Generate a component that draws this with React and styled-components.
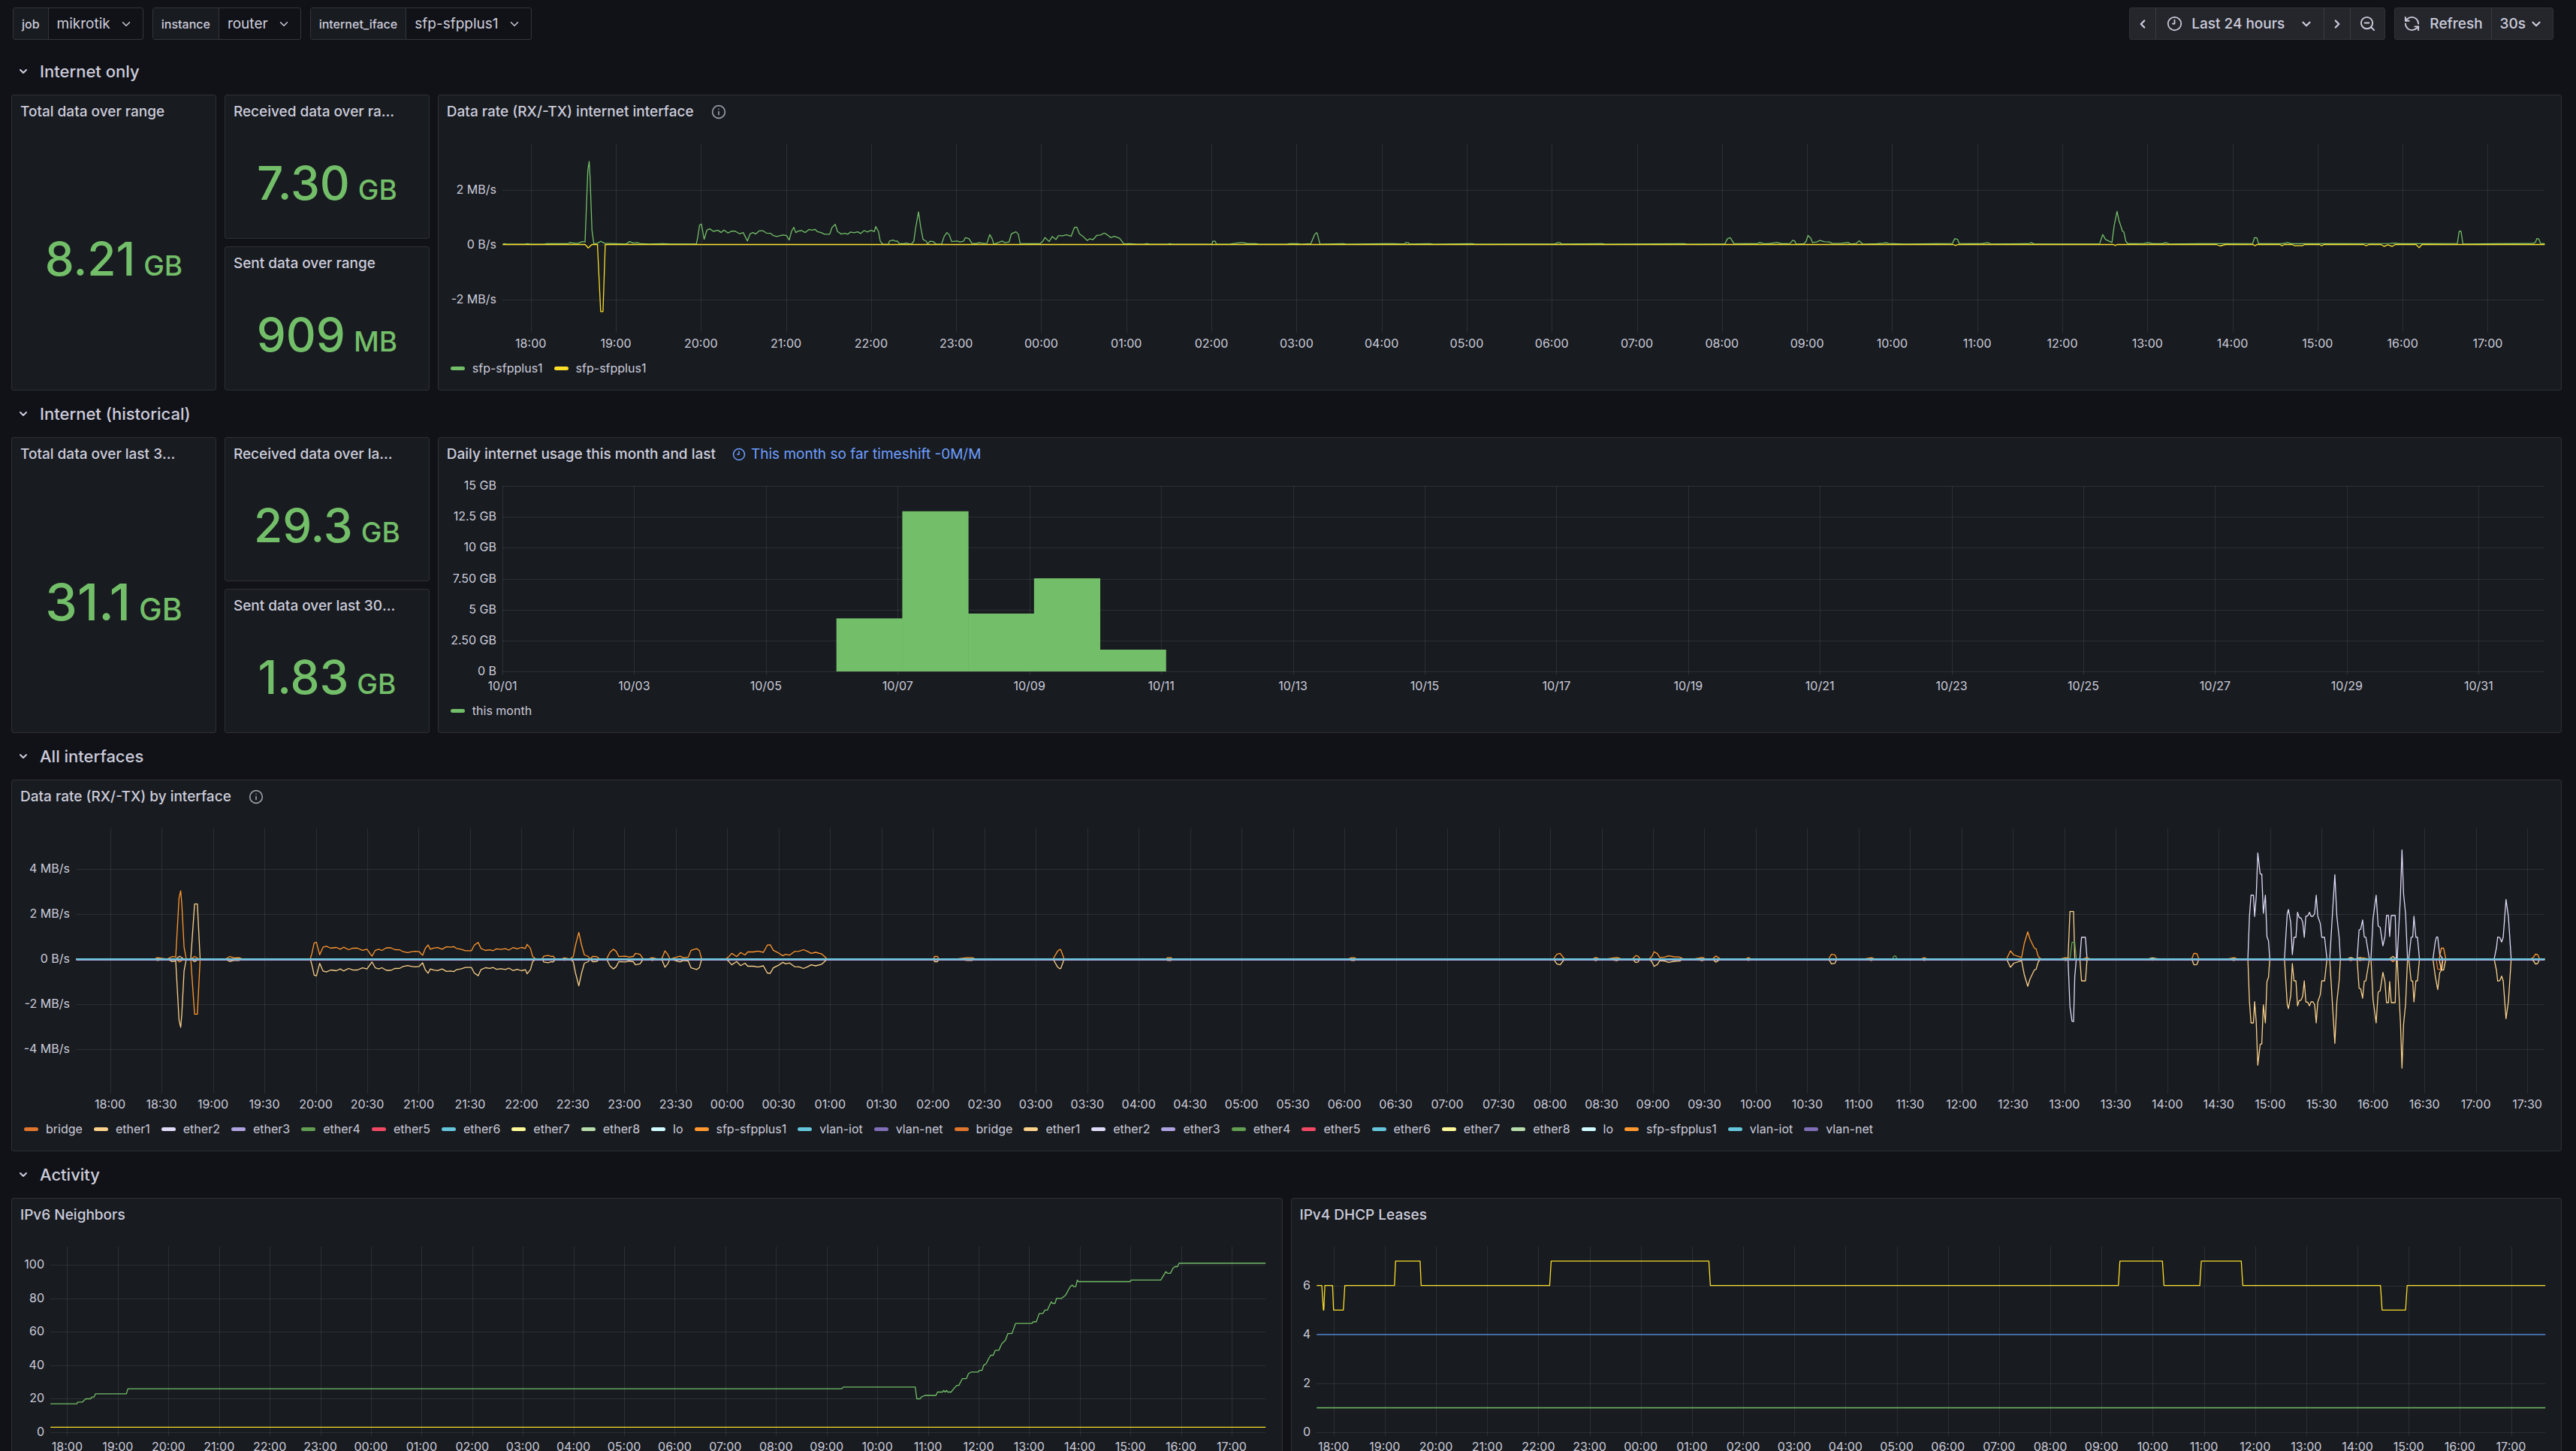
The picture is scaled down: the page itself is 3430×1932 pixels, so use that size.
import React, { useLayoutEffect, useRef, useState } from "react";
import styled, { createGlobalStyle } from "styled-components";
import {
  ChevronDown,
  ChevronLeft,
  ChevronRight,
  RefreshCcw,
  ZoomOut
} from "lucide-react";

const GREEN = "#73bf69";
const YELLOW = "#fade2a";
const BLUE = "#5794f2";

const IFACE_COLORS = {
  bridge: "#e0752d",
  ether1: "#fbd18b",
  ether2: "#dedaf7",
  ether3: "#aea2e0",
  ether4: "#629e51",
  ether5: "#f24865",
  ether6: "#65c5db",
  ether7: "#fff899",
  ether8: "#b7dbab",
  lo: "#cffaff",
  "sfp-sfpplus1": "#ff9830",
  "vlan-iot": "#65c5db",
  "vlan-net": "#806eb7"
};

// Times are hours from midnight of the first day, values are MB/s.
const unpack = (pairs, { tick, hour, perHour, perUnit }) =>
  pairs.map(([t, level]) => [hour + (t - tick) / perHour, level / perUnit]);

const negate = points => points.map(([t, v]) => [t, -v]);

// idle chatter is not worth drawing next to the busy interfaces
const quiet = points => points.map(([t, v]) => [t, Math.abs(v) < 0.05 ? 0 : v]);

const WAN = { tick: 223, hour: 18, perHour: 185, perUnit: 110 };
const LAN = { tick: 24, hour: 36, perHour: 259, perUnit: 90 };

const wanRx = unpack(
  [
    [162, 1], [166, 3], [170, 1], [210, 1], [216, 3], [222, 1], [253, 1], [256, 3],
    [302, 3], [308, 7], [325, 4], [335, 12], [341, 10], [347, 298], [350, 333], [352, 268],
    [356, 58], [360, 4], [368, 5], [375, 13], [383, 5], [430, 2], [438, 12], [446, 6],
    [455, 7], [462, 3], [480, 2], [510, 3], [530, 2], [583, 2], [586, 28], [590, 78],
    [594, 82], [600, 21], [606, 58], [612, 63], [620, 53], [630, 57], [637, 48], [643, 58],
    [652, 46], [660, 54], [668, 53], [677, 43], [685, 48], [694, 14], [700, 43], [706, 48],
    [712, 42], [720, 55], [728, 55], [735, 46], [744, 45], [750, 36], [758, 32], [766, 36],
    [772, 38], [779, 36], [785, 18], [790, 53], [795, 69], [799, 48], [805, 54], [812, 56],
    [820, 48], [828, 60], [836, 58], [841, 61], [846, 52], [854, 48], [862, 41], [873, 41],
    [878, 68], [885, 81], [890, 52], [898, 42], [906, 45], [912, 41], [918, 50], [926, 47],
    [934, 51], [940, 44], [948, 56], [955, 50], [963, 57], [970, 52], [973, 72], [979, 52],
    [983, 13], [989, 0], [1000, 0], [1003, 14], [1011, 18], [1016, 13], [1020, 14], [1024, 4],
    [1034, 3], [1040, 6], [1050, 1], [1056, 13], [1060, 68], [1066, 131], [1071, 68], [1076, 20],
    [1083, 13], [1086, 2], [1091, 13], [1098, 12], [1104, 2], [1116, 1], [1122, 33], [1128, 48],
    [1133, 38], [1138, 12], [1150, 14], [1156, 10], [1164, 13], [1168, 28], [1176, 23], [1182, 5],
    [1190, 3], [1198, 7], [1208, 4], [1215, 5], [1221, 40], [1226, 23], [1230, 1], [1240, 8],
    [1248, 14], [1254, 7], [1263, 10], [1268, 43], [1278, 51], [1283, 41], [1287, 4], [1330, 3],
    [1336, 12], [1341, 28], [1350, 12], [1357, 32], [1365, 20], [1370, 35], [1380, 35], [1388, 39],
    [1398, 33], [1405, 68], [1410, 70], [1416, 43], [1424, 32], [1433, 16], [1438, 23], [1445, 19],
    [1454, 37], [1462, 38], [1470, 46], [1477, 38], [1484, 28], [1492, 33], [1503, 25], [1513, 2],
    [1524, 3], [1540, 1], [1556, 1], [1562, 3], [1570, 1], [1608, 1], [1612, 3], [1618, 1],
    [1704, 1], [1706, 13], [1711, 13], [1714, 1], [1744, 2], [1765, 7], [1773, 7], [1781, 3],
    [1800, 3], [1806, 1], [1868, 1], [1872, 3], [1890, 3], [1898, 1], [1919, 3], [1927, 38],
    [1931, 47], [1933, 45], [1939, 1], [1990, 3], [1996, 1], [2080, 3], [2100, 3], [2122, 2],
    [2125, 7], [2131, 7], [2134, 2], [2178, 3], [2186, 1], [2270, 3], [2276, 1], [2449, 2],
    [2456, 7], [2461, 7], [2465, 2], [2552, 3], [2560, 1], [2730, 3], [2738, 1], [2819, 2],
    [2825, 23], [2831, 28], [2839, 4], [2889, 3], [2895, 8], [2903, 4], [2914, 3], [2933, 8],
    [2943, 3], [2961, 4], [2967, 17], [2971, 14], [2975, 1], [2991, 3], [2996, 13], [3000, 36],
    [3006, 26], [3010, 8], [3019, 10], [3026, 16], [3036, 11], [3046, 10], [3053, 4], [3071, 4],
    [3087, 8], [3093, 2], [3105, 4], [3111, 15], [3120, 1], [3150, 3], [3163, 5], [3170, 7],
    [3175, 4], [3210, 2], [3314, 4], [3319, 23], [3325, 21], [3329, 4], [3377, 3], [3391, 7],
    [3398, 2], [3479, 3], [3486, 7], [3492, 2], [3560, 2], [3634, 2], [3641, 40], [3647, 20],
    [3661, 8], [3666, 78], [3672, 133], [3676, 98], [3684, 53], [3687, 50], [3691, 13], [3696, 3],
    [3730, 4], [3740, 7], [3750, 3], [3770, 3], [3778, 7], [3786, 2], [3850, 3], [3967, 4],
    [3971, 28], [3976, 27], [3980, 3], [4031, 3], [4043, 7], [4051, 3], [4266, 4], [4275, 6],
    [4286, 3], [4412, 4], [4416, 53], [4420, 53], [4424, 2], [4500, 3], [4577, 4], [4582, 10],
    [4585, 24], [4589, 22], [4593, 4], [4602, 3]
  ],
  WAN
);

const wanTx = unpack(
  [
    [162, 0], [341, 0], [348, -14], [356, 0], [368, 0], [375, -269], [380, -269], [385, 0],
    [3316, 0], [3321, -4], [3326, 0], [3664, 0], [3668, -4], [3672, 0], [3888, 0], [3896, -6],
    [3908, 0], [3968, 0], [3972, -5], [3976, 0], [4025, 0], [4031, -5], [4036, 0], [4053, 0],
    [4058, -5], [4075, -5], [4080, 0], [4112, 0], [4117, -5], [4122, 0], [4208, 0], [4214, -5],
    [4220, 0], [4246, 0], [4253, -8], [4261, -1], [4270, -8], [4277, 0], [4322, 0], [4329, -13],
    [4335, 0], [4602, 0]
  ],
  WAN
);

const lanBursts = [
  [322, 0], [326, 87], [336, 87], [340, 0],
  [745, 0], [749, 170], [753, 255], [759, 255], [762, 170], [766, 250], [770, 424], [776, 340],
  [780, 339], [784, 183], [789, 255], [793, 90], [797, 72], [800, 0],
  [837, 0], [844, 180], [847, 198], [853, 145], [857, 18], [861, 87], [866, 87], [870, 187],
  [874, 167], [879, 163], [883, 148], [887, 87], [891, 171], [896, 173], [900, 187], [904, 171],
  [909, 171], [913, 182], [917, 255], [921, 171], [927, 143], [931, 87], [938, 87], [944, 0],
  [951, 0], [959, 210], [964, 337], [969, 170], [975, 85], [978, 0],
  [1020, 0], [1025, 117], [1029, 119], [1034, 156], [1038, 88], [1042, 87], [1051, 0],
  [1055, 0], [1060, 160], [1068, 255], [1073, 132], [1078, 127], [1085, 53], [1090, 90],
  [1094, 174], [1099, 174], [1102, 90], [1106, 174], [1116, 174], [1119, 0],
  [1121, 0], [1129, 250], [1133, 436], [1137, 260], [1142, 180], [1147, 0],
  [1150, 0], [1156, 87], [1160, 88], [1163, 171], [1168, 87], [1172, 87], [1177, 0]
];

const lateBurst = [
  [1365, 0], [1371, 45], [1374, 88], [1379, 86], [1384, 68], [1388, 88], [1395, 238],
  [1401, 170], [1408, 0]
];

const ether2Rx = unpack(
  [...lanBursts, [1211, 0], [1217, 70], [1220, 88], [1223, 88], [1228, 18], [1236, 0], ...lateBurst],
  LAN
);
const ether1Tx = negate(
  unpack(
    [...lanBursts, [1211, 0], [1217, 70], [1223, 122], [1228, 55], [1233, 42], [1236, 0], ...lateBurst],
    LAN
  )
);
const ether1Rx = unpack([[292, 0], [297, 190], [306, 190], [309, 0]], LAN);
const ether2Tx = unpack(
  [[292, 0], [297, -190], [302, -248], [306, -250], [309, -70], [313, 0]],
  LAN
);
const ether4Rx = unpack(
  [[-150, 0], [-146, 12], [-142, 12], [-138, 0], [297, 0], [302, 67], [309, 67], [313, 0]],
  LAN
);
const bridgeTx = unpack(
  [[1020, 0], [1024, -5], [1030, 0], [1219, 0], [1223, -40], [1230, -42], [1236, 0]],
  LAN
);

const neighbors = [
  [17.67, 17], [18.19, 17], [18.21, 18], [18.3, 18], [18.33, 19], [18.37, 20], [18.46, 20],
  [18.49, 21], [18.53, 21], [18.56, 23], [19.17, 23], [19.2, 26], [33.3, 26], [33.33, 27],
  [34.75, 27], [34.78, 20], [34.85, 20], [34.87, 21], [34.94, 22], [35.16, 22], [35.19, 24],
  [35.29, 24], [35.31, 25], [35.34, 24], [35.37, 25], [35.39, 24], [35.46, 24], [35.51, 26],
  [35.57, 28], [35.61, 28], [35.68, 32], [35.76, 32], [35.8, 35], [35.86, 36], [35.99, 36],
  [36.02, 37], [36.07, 37], [36.1, 40], [36.15, 41], [36.2, 44], [36.24, 46], [36.29, 46],
  [36.33, 49], [36.4, 49], [36.46, 53], [36.53, 55], [36.58, 59], [36.66, 59], [36.73, 65],
  [37.05, 65], [37.08, 66], [37.14, 66], [37.2, 71], [37.27, 71], [37.31, 73], [37.36, 73],
  [37.42, 77], [37.44, 78], [37.46, 77], [37.51, 77], [37.54, 80], [37.64, 80], [37.72, 82],
  [37.81, 87], [37.85, 88], [37.88, 87], [37.92, 87], [37.95, 91], [37.97, 90], [38.99, 90],
  [39.02, 91], [39.6, 91], [39.66, 94], [39.7, 96], [39.73, 95], [39.79, 95], [39.84, 98],
  [39.88, 99], [39.93, 99], [39.96, 101], [41.67, 101]
];

const leases = [
  [17.67, 6], [17.77, 6], [17.8, 5], [17.81, 5], [17.83, 6], [17.98, 6], [18, 5], [18.19, 5],
  [18.22, 6], [19.19, 6], [19.21, 7], [19.69, 7], [19.71, 6], [22.22, 6], [22.25, 7],
  [25.33, 7], [25.36, 6], [33.33, 6], [33.36, 7], [34.19, 7], [34.22, 6], [34.92, 6],
  [34.95, 7], [35.73, 7], [35.76, 6], [38.45, 6], [38.48, 5], [38.94, 5], [38.97, 6],
  [41.67, 6]
];

const flat = value => [[17.67, value], [41.67, value]];

const dailyUsage = [4.29, 12.95, 4.68, 7.53, 1.76];

const clock = t => {
  const h = String(Math.floor(t) % 24).padStart(2, "0");
  return `${h}:${t % 1 ? "30" : "00"}`;
};

const timeTicks = (count, step) =>
  Array.from({ length: count }, (_, i) => ({
    at: 18 + i * step,
    label: clock(18 + i * step)
  }));

const DAY = { from: 17.667, to: 41.667 };
const hourly = timeTicks(24, 1);
const halfHourly = timeTicks(48, 0.5);
const monthTicks = Array.from({ length: 16 }, (_, i) => ({
  at: i * 2,
  label: `10/${String(i * 2 + 1).padStart(2, "0")}`
}));

const ClockIcon = ({ size }) => (
  <svg width={size} height={size} viewBox="0 0 24 24" fill="none" stroke="currentColor" strokeWidth="2" strokeLinecap="round" strokeLinejoin="round" aria-hidden="true">
    <circle cx="12" cy="12" r="10" />
    <path d="M12 6.5V12H9" />
  </svg>
);

const InfoIcon = ({ size }) => (
  <svg width={size} height={size} viewBox="0 0 24 24" fill="none" stroke="currentColor" strokeWidth="2" strokeLinecap="round" aria-hidden="true">
    <circle cx="12" cy="12" r="10" />
    <path d="M12 11.5v5M12 7.5v.1" />
  </svg>
);

const TOP = 21;
const BOTTOM = 32;
const TICK = 5;
const RIGHT = 12;

const Chart = ({ label, height, axis, x, y, xTicks, yTicks, lines = [], bars = [] }) => {
  const ref = useRef(null);
  const [width, setWidth] = useState(0);

  useLayoutEffect(() => {
    const measure = () => setWidth(ref.current.clientWidth);
    measure();
    const observer = new ResizeObserver(measure);
    observer.observe(ref.current);
    return () => observer.disconnect();
  }, []);

  const right = width - RIGHT;
  const bottom = height - BOTTOM;
  const px = v => axis + ((v - x.from) / (x.to - x.from)) * (right - axis);
  const py = v => bottom - ((v - y.from) / (y.to - y.from)) * (bottom - TOP);
  const snap = v => Math.round(v) + 0.5;

  return (
    <Plot ref={ref} $height={height}>
      {width > 0 && (
        <svg width={width} height={height} role="img" aria-label={label}>
          {xTicks.map(t => (
            <GridLine key={t.at} x1={snap(px(t.at))} x2={snap(px(t.at))} y1={TOP} y2={bottom + TICK} />
          ))}
          {yTicks.map(t => (
            <GridLine key={t.at} x1={axis} x2={right} y1={snap(py(t.at))} y2={snap(py(t.at))} />
          ))}
          {bars.map((b, i) => (
            <rect key={i} x={px(b.from)} y={py(b.value)} width={px(b.to) - px(b.from) + 0.5} height={py(0) - py(b.value)} fill={GREEN} />
          ))}
          {lines.map((l, i) => (
            <Line
              key={i}
              points={l.points.map(([t, v]) => `${px(t).toFixed(1)},${(py(v) + (l.shift || 0)).toFixed(1)}`).join(" ")}
              stroke={l.color}
              $width={l.width}
            />
          ))}
          {yTicks.map(t => (
            <AxisText key={t.at} x={axis - 8} y={py(t.at) + 5} textAnchor="end">{t.label}</AxisText>
          ))}
          {xTicks.map(t => (
            <AxisText key={t.at} x={px(t.at)} y={bottom + TICK + 20} textAnchor="middle">{t.label}</AxisText>
          ))}
        </svg>
      )}
    </Plot>
  );
};

const Legend = ({ items }) => (
  <LegendList>
    {items.map((item, i) => (
      <li key={i}>
        <LegendButton type="button">
          <Swatch $color={item.color} />
          {item.name}
        </LegendButton>
      </li>
    ))}
  </LegendList>
);

const Variable = ({ name, value }) => (
  <VariableBox>
    <VariableLabel htmlFor={`var-${name}`}>{name}</VariableLabel>
    <SelectCell>
      <Select id={`var-${name}`} defaultValue={value}>
        <option>{value}</option>
      </Select>
      <SelectArrow size={18} />
    </SelectCell>
  </VariableBox>
);

const StatPanel = ({ title, value, unit, large }) => (
  <Panel>
    <PanelHeader>
      <PanelTitle $reserve>{title}</PanelTitle>
    </PanelHeader>
    <Stat>
      <StatValue $large={large}>{value}</StatValue>
      <StatUnit $large={large}>{unit}</StatUnit>
    </Stat>
  </Panel>
);

const Section = ({ title, children }) => {
  const [open, setOpen] = useState(true);
  return (
    <section>
      <SectionToggle type="button" aria-expanded={open} onClick={() => setOpen(!open)}>
        <ChevronDown size={16} strokeWidth={3} />
        {title}
      </SectionToggle>
      {open && <Grid>{children}</Grid>}
    </section>
  );
};

const names = Object.keys(IFACE_COLORS);
const ifaceLegend = [...names, ...names].map(name => ({ name, color: IFACE_COLORS[name] }));

const App = () => {
  return (
    <Page>
      <GlobalStyle />
      <Toolbar>
        <Group>
          <Variable name="job" value="mikrotik" />
          <Variable name="instance" value="router" />
          <Variable name="internet_iface" value="sfp-sfpplus1" />
        </Group>
        <Group>
          <ButtonGroup>
            <ToolButton type="button" $pad={8} aria-label="Move time range backwards">
              <ChevronLeft size={18} strokeWidth={3} />
            </ToolButton>
            <ToolButton type="button" $pad={14} aria-haspopup="true">
              <ClockIcon size={21} />
              <RangeText>Last 24 hours</RangeText>
              <ChevronDown size={18} strokeWidth={3} />
            </ToolButton>
            <ToolButton type="button" $pad={8} aria-label="Move time range forwards">
              <ChevronRight size={18} strokeWidth={3} />
            </ToolButton>
            <ToolButton type="button" $pad={11} aria-label="Zoom out time range">
              <ZoomOut size={23} />
            </ToolButton>
          </ButtonGroup>
          <ButtonGroup>
            <ToolButton type="button" $pad={11}>
              <RefreshCcw size={23} />
              Refresh
            </ToolButton>
            <SelectCell>
              <IntervalSelect aria-label="Refresh interval" defaultValue="30s">
                <option>30s</option>
              </IntervalSelect>
              <SelectArrow size={18} strokeWidth={3} />
            </SelectCell>
          </ButtonGroup>
        </Group>
      </Toolbar>

      <Section title="Internet only">
        <Cell $span={2}>
          <StatPanel title="Total data over range" value="8.21" unit="GB" />
        </Cell>
        <Cell $span={2}>
          <StatPanel title="Received data over range" value="7.30" unit="GB" />
          <StatPanel title="Sent data over range" value="909" unit="MB" />
        </Cell>
        <Cell $span={20}>
          <Panel>
            <PanelHeader>
              <PanelTitle>Data rate (RX/-TX) internet interface</PanelTitle>
              <Info><InfoIcon size={20} /></Info>
            </PanelHeader>
            <Chart
              label="Data rate of the internet interface"
              height={300}
              axis={75}
              x={DAY}
              y={{ from: -3.08, to: 3.685 }}
              xTicks={hourly}
              yTicks={[
                { at: 2, label: "2 MB/s" },
                { at: 0, label: "0 B/s" },
                { at: -2, label: "-2 MB/s" }
              ]}
              lines={[
                { points: wanRx, color: GREEN },
                { points: wanTx, color: YELLOW }
              ]}
            />
            <Legend
              items={[
                { name: "sfp-sfpplus1", color: GREEN },
                { name: "sfp-sfpplus1", color: YELLOW }
              ]}
            />
          </Panel>
        </Cell>
      </Section>

      <Section title="Internet (historical)">
        <Cell $span={2}>
          <StatPanel title="Total data over last 30 days" value="31.1" unit="GB" large />
        </Cell>
        <Cell $span={2}>
          <StatPanel title="Received data over last 30 days" value="29.3" unit="GB" />
          <StatPanel title="Sent data over last 30 days" value="1.83" unit="GB" />
        </Cell>
        <Cell $span={20}>
          <Panel>
            <PanelHeader>
              <PanelTitle>Daily internet usage this month and last</PanelTitle>
              <TimeShift href="#timeshift">
                <ClockIcon size={18} />
                This month so far timeshift -0M/M
              </TimeShift>
            </PanelHeader>
            <Chart
              label="Daily internet usage"
              height={300}
              axis={75}
              x={{ from: 0, to: 31 }}
              y={{ from: 0, to: 15 }}
              xTicks={monthTicks}
              yTicks={[
                { at: 15, label: "15 GB" },
                { at: 12.5, label: "12.5 GB" },
                { at: 10, label: "10 GB" },
                { at: 7.5, label: "7.50 GB" },
                { at: 5, label: "5 GB" },
                { at: 2.5, label: "2.50 GB" },
                { at: 0, label: "0 B" }
              ]}
              bars={dailyUsage.map((value, i) => ({ from: 5.07 + i, to: 6.07 + i, value }))}
            />
            <Legend items={[{ name: "this month", color: GREEN }]} />
          </Panel>
        </Cell>
      </Section>

      <Section title="All interfaces">
        <Cell $span={24}>
          <Panel>
            <PanelHeader>
              <PanelTitle>Data rate (RX/-TX) by interface</PanelTitle>
              <Info><InfoIcon size={20} /></Info>
            </PanelHeader>
            <Chart
              label="Data rate by interface"
              height={401}
              axis={75}
              x={DAY}
              y={{ from: -5.8, to: 5.8 }}
              xTicks={halfHourly}
              yTicks={[
                { at: 4, label: "4 MB/s" },
                { at: 2, label: "2 MB/s" },
                { at: 0, label: "0 B/s" },
                { at: -2, label: "-2 MB/s" },
                { at: -4, label: "-4 MB/s" }
              ]}
              lines={[
                { points: bridgeTx, color: IFACE_COLORS.bridge },
                { points: quiet(negate(wanTx)), color: IFACE_COLORS.ether1 },
                { points: ether1Rx, color: IFACE_COLORS.ether1 },
                { points: ether2Rx, color: IFACE_COLORS.ether2 },
                { points: ether4Rx, color: IFACE_COLORS.ether4 },
                { points: quiet(wanRx), color: IFACE_COLORS["sfp-sfpplus1"] },
                { points: quiet(negate(wanRx)), color: IFACE_COLORS.ether1 },
                { points: ether1Tx, color: IFACE_COLORS.ether1 },
                { points: ether2Tx, color: IFACE_COLORS.ether2 },
                { points: quiet(wanTx), color: IFACE_COLORS["sfp-sfpplus1"] },
                { points: flat(0), color: IFACE_COLORS.ether3, shift: 1, width: 2 },
                { points: flat(0), color: IFACE_COLORS["vlan-iot"], width: 2 }
              ]}
            />
            <Legend items={ifaceLegend} />
          </Panel>
        </Cell>
      </Section>

      <Section title="Activity">
        <Cell $span={12}>
          <Panel>
            <PanelHeader>
              <PanelTitle>IPv6 Neighbors</PanelTitle>
            </PanelHeader>
            <Chart
              label="IPv6 neighbors"
              height={300}
              axis={41}
              x={DAY}
              y={{ from: 0, to: 110.9 }}
              xTicks={hourly}
              yTicks={[100, 80, 60, 40, 20, 0].map(at => ({ at, label: at }))}
              lines={[
                { points: neighbors, color: GREEN },
                { points: flat(3), color: YELLOW }
              ]}
            />
          </Panel>
        </Cell>
        <Cell $span={12}>
          <Panel>
            <PanelHeader>
              <PanelTitle>IPv4 DHCP Leases</PanelTitle>
            </PanelHeader>
            <Chart
              label="IPv4 DHCP leases"
              height={300}
              axis={23}
              x={DAY}
              y={{ from: 0, to: 7.59 }}
              xTicks={hourly}
              yTicks={[6, 4, 2, 0].map(at => ({ at, label: at }))}
              lines={[
                { points: flat(1), color: GREEN },
                { points: leases, color: YELLOW },
                { points: flat(4), color: BLUE }
              ]}
            />
          </Panel>
        </Cell>
      </Section>
    </Page>
  );
};

export default App;

const GlobalStyle = createGlobalStyle`
  * {
    box-sizing: border-box;
  }
  body {
    margin: 0;
    background: #111217;
    color: #ccccdc;
    font-family: Inter, "Liberation Sans", sans-serif;
  }
  button, select {
    font: inherit;
    color: inherit;
    margin: 0;
    border: 0;
    background: none;
    cursor: pointer;
  }
`;

const Page = styled.main`
  height: 100vh;
  overflow: hidden auto;
  scrollbar-width: none;
  padding: 10px 19px 0 15px;
`;

const Toolbar = styled.header`
  display: flex;
  justify-content: space-between;
  padding: 0 11px 0 2px;
  margin-bottom: 22px;
`;

const Group = styled.div`
  display: flex;
  gap: 12px;
`;

const VariableBox = styled.div`
  display: flex;
  height: 43px;
  border: 1px solid #33353b;
  border-radius: 3px;
`;

const VariableLabel = styled.label`
  display: flex;
  align-items: center;
  padding: 0 11px;
  background: #181b1f;
  border-right: 1px solid #33353b;
  font-size: 16px;
  font-weight: 500;
`;

const SelectCell = styled.div`
  display: grid;
  align-items: stretch;
`;

const Select = styled.select`
  grid-area: 1 / 1;
  appearance: none;
  field-sizing: content;
  padding: 0 43px 0 11px;
  font-size: 19px;
`;

const IntervalSelect = styled(Select)`
  padding: 0 36px 0 11px;
  font-weight: 500;
`;

const SelectArrow = styled(ChevronDown)`
  grid-area: 1 / 1;
  align-self: center;
  justify-self: end;
  margin-right: 13px;
  pointer-events: none;
`;

const ButtonGroup = styled.div`
  display: flex;
  height: 43px;
  border: 1px solid #303238;
  border-radius: 3px;
  background: #24262b;

  > * + * {
    border-left: 1px solid #3a3b42;
  }
`;

const ToolButton = styled.button`
  display: flex;
  align-items: center;
  gap: 12px;
  padding: 0 ${props => props.$pad}px;
  font-size: 19px;
  font-weight: 500;
`;

const RangeText = styled.span`
  margin-right: 8px;
`;

const SectionToggle = styled.button`
  display: flex;
  align-items: center;
  gap: 14px;
  height: 40px;
  padding: 0 8px;
  margin-bottom: 11px;
  font-size: 22px;
  font-weight: 500;
`;

const Grid = styled.div`
  display: grid;
  grid-template-columns: repeat(24, minmax(0, 1fr));
  gap: 11px;
  margin-bottom: 11px;
`;

const Cell = styled.div`
  grid-column: span ${props => props.$span};
  display: flex;
  flex-direction: column;
  gap: 10px;
`;

const Panel = styled.article`
  flex: 1 1 0;
  display: flex;
  flex-direction: column;
  padding: 0 10px 9px;
  background: #181b1f;
  border: 1px solid #2d2f34;
  border-radius: 3px;
`;

const PanelHeader = styled.div`
  display: flex;
  align-items: center;
  height: 43px;
  padding-left: 1px;
`;

const PanelTitle = styled.h2`
  margin: 0;
  padding-right: ${props => (props.$reserve ? "34px" : "0")};
  font-size: 19px;
  font-weight: 500;
  line-height: 24px;
  white-space: nowrap;
  overflow: hidden;
  text-overflow: ellipsis;
`;

const Info = styled.span`
  display: flex;
  margin-left: 23px;
  color: #9b9ca8;
`;

const TimeShift = styled.a`
  display: flex;
  align-items: center;
  gap: 7px;
  margin-left: 22px;
  font-size: 19px;
  color: #6e9fff;
  text-decoration: none;
`;

const Stat = styled.div`
  flex: 1;
  display: flex;
  align-items: baseline;
  align-content: center;
  justify-content: center;
  flex-wrap: wrap;
  gap: 11px;
  padding-top: 9px;
  color: ${GREEN};
  font-weight: 500;
`;

const StatValue = styled.span`
  font-size: ${props => (props.$large ? "68px" : "62px")};
  line-height: 72px;
`;

const StatUnit = styled.span`
  font-size: ${props => (props.$large ? "41px" : "37px")};
`;

const Plot = styled.div`
  height: ${props => props.$height}px;
  overflow: hidden;

  svg {
    display: block;
  }
`;

const GridLine = styled.line`
  stroke: rgba(240, 250, 255, 0.09);
  stroke-width: 1;
`;

const Line = styled.polyline`
  fill: none;
  stroke-width: ${props => props.$width || 1.3};
  stroke-linejoin: round;
`;

const AxisText = styled.text`
  fill: #ccccdc;
  font-size: 16px;
`;

const LegendList = styled.ul`
  display: flex;
  flex-wrap: wrap;
  align-items: center;
  gap: 0 15px;
  min-height: 40px;
  margin: 0;
  padding: 0 6px;
  list-style: none;
`;

const LegendButton = styled.button`
  display: flex;
  align-items: center;
  gap: 10px;
  padding: 0;
  font-size: 16px;
`;

const Swatch = styled.span`
  width: 19px;
  height: 5px;
  border-radius: 3px;
  background: ${props => props.$color};
`;
